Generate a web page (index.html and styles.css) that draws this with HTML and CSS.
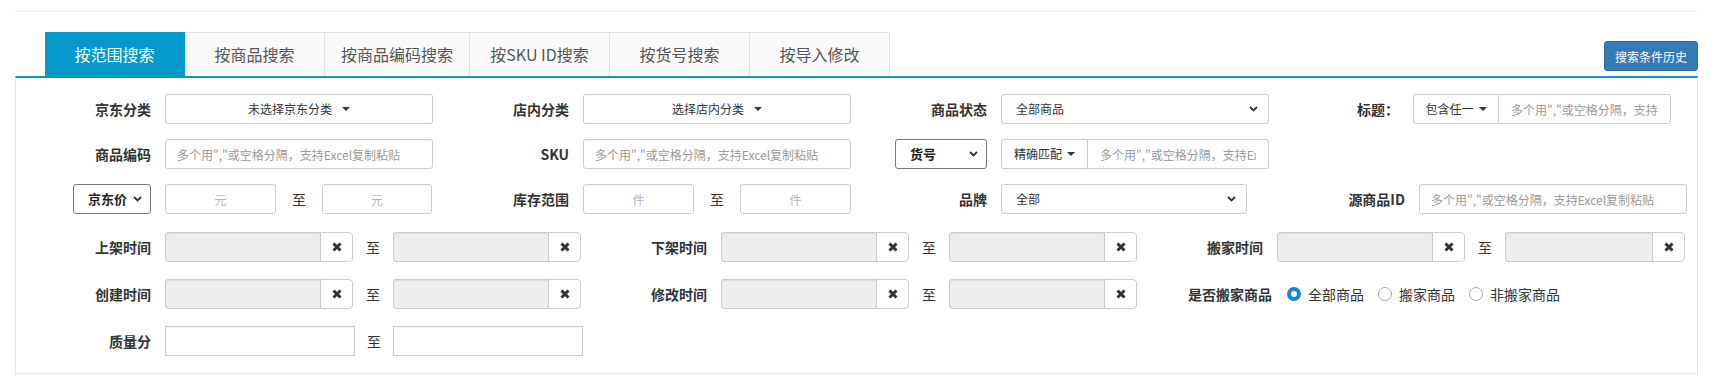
FILE: index.html
```html
<!DOCTYPE html>
<html lang="zh-CN">
<head>
    <meta charset="UTF-8">
    <title>商品搜索</title>
    <link rel="stylesheet" href="styles.css">
</head>
<body>
    <div class="wrap">
        <div class="top-rule"></div>

        <div class="tab-head">
            <ul class="tabs">
                <li class="tab active">按范围搜索</li>
                <li class="tab">按商品搜索</li>
                <li class="tab">按商品编码搜索</li>
                <li class="tab">按SKU ID搜索</li>
                <li class="tab">按货号搜索</li>
                <li class="tab">按导入修改</li>
            </ul>
            <button class="btn-history">搜索条件历史</button>
        </div>

        <div class="panel">
            <div class="panel-body">
                <!-- 第一行 -->
                <div class="row row-quad">
                    <div class="field">
                        <label class="field-label">京东分类</label>
                        <div class="dropdown w-268">未选择京东分类<span class="caret"></span></div>
                    </div>
                    <div class="field">
                        <label class="field-label">店内分类</label>
                        <div class="dropdown w-268">选择店内分类<span class="caret"></span></div>
                    </div>
                    <div class="field">
                        <label class="field-label">商品状态</label>
                        <div class="select w-268">
                            <span>全部商品</span>
                            <svg class="chev" width="9" height="6" viewBox="0 0 9 6"><path d="M1 1l3.5 3.5L8 1"/></svg>
                        </div>
                    </div>
                    <div class="field">
                        <label class="field-label label-short">标题：</label>
                        <div class="input-group w-258">
                            <div class="addon-btn w-86">包含任一<span class="caret"></span></div>
                            <input class="group-input" type="text" placeholder="多个用&quot;,&quot;或空格分隔，支持Excel复制粘贴">
                        </div>
                    </div>
                </div>

                <!-- 第二行 -->
                <div class="row row-quad">
                    <div class="field">
                        <label class="field-label">商品编码</label>
                        <input class="text-input w-268" type="text" placeholder="多个用&quot;,&quot;或空格分隔，支持Excel复制粘贴">
                    </div>
                    <div class="field">
                        <label class="field-label">SKU</label>
                        <input class="text-input w-268" type="text" placeholder="多个用&quot;,&quot;或空格分隔，支持Excel复制粘贴">
                    </div>
                    <div class="field">
                        <div class="field-label">
                            <div class="select select-dark w-92">
                                <span>货号</span>
                                <svg class="chev" width="9" height="6" viewBox="0 0 9 6"><path d="M1 1l3.5 3.5L8 1"/></svg>
                            </div>
                        </div>
                        <div class="input-group w-268">
                            <div class="addon-btn w-87">精确匹配<span class="caret"></span></div>
                            <input class="group-input" type="text" placeholder="多个用&quot;,&quot;或空格分隔，支持Excel复制粘贴">
                        </div>
                    </div>
                    <div class="field"></div>
                </div>

                <!-- 第三行 -->
                <div class="row row-quad row-gap-lg">
                    <div class="field">
                        <div class="field-label">
                            <div class="select select-dark w-78">
                                <span>京东价</span>
                                <svg class="chev" width="9" height="6" viewBox="0 0 9 6"><path d="M1 1l3.5 3.5L8 1"/></svg>
                            </div>
                        </div>
                        <input class="text-input center w-111" type="text" placeholder="元">
                        <span class="sep w-46">至</span>
                        <input class="text-input center w-110" type="text" placeholder="元">
                    </div>
                    <div class="field">
                        <label class="field-label">库存范围</label>
                        <input class="text-input center w-111" type="text" placeholder="件">
                        <span class="sep w-46">至</span>
                        <input class="text-input center w-111" type="text" placeholder="件">
                    </div>
                    <div class="field">
                        <label class="field-label">品牌</label>
                        <div class="select w-246">
                            <span>全部</span>
                            <svg class="chev" width="9" height="6" viewBox="0 0 9 6"><path d="M1 1l3.5 3.5L8 1"/></svg>
                        </div>
                    </div>
                    <div class="field">
                        <label class="field-label">源商品ID</label>
                        <input class="text-input w-268" type="text" placeholder="多个用&quot;,&quot;或空格分隔，支持Excel复制粘贴">
                    </div>
                </div>

                <!-- 时间行 -->
                <div class="row row-tri">
                    <div class="field">
                        <label class="field-label">上架时间</label>
                        <div class="date-group"><div class="date-input"></div><div class="date-clear"><svg width="12" height="12" viewBox="0 0 12 12"><path d="M2.5 2.5l7 7M9.5 2.5l-7 7"/></svg></div></div>
                        <span class="sep">至</span>
                        <div class="date-group"><div class="date-input"></div><div class="date-clear"><svg width="12" height="12" viewBox="0 0 12 12"><path d="M2.5 2.5l7 7M9.5 2.5l-7 7"/></svg></div></div>
                    </div>
                    <div class="field">
                        <label class="field-label">下架时间</label>
                        <div class="date-group"><div class="date-input"></div><div class="date-clear"><svg width="12" height="12" viewBox="0 0 12 12"><path d="M2.5 2.5l7 7M9.5 2.5l-7 7"/></svg></div></div>
                        <span class="sep">至</span>
                        <div class="date-group"><div class="date-input"></div><div class="date-clear"><svg width="12" height="12" viewBox="0 0 12 12"><path d="M2.5 2.5l7 7M9.5 2.5l-7 7"/></svg></div></div>
                    </div>
                    <div class="field">
                        <label class="field-label">搬家时间</label>
                        <div class="date-group"><div class="date-input"></div><div class="date-clear"><svg width="12" height="12" viewBox="0 0 12 12"><path d="M2.5 2.5l7 7M9.5 2.5l-7 7"/></svg></div></div>
                        <span class="sep">至</span>
                        <div class="date-group narrow"><div class="date-input"></div><div class="date-clear"><svg width="12" height="12" viewBox="0 0 12 12"><path d="M2.5 2.5l7 7M9.5 2.5l-7 7"/></svg></div></div>
                    </div>
                </div>

                <div class="row row-tri">
                    <div class="field">
                        <label class="field-label">创建时间</label>
                        <div class="date-group"><div class="date-input"></div><div class="date-clear"><svg width="12" height="12" viewBox="0 0 12 12"><path d="M2.5 2.5l7 7M9.5 2.5l-7 7"/></svg></div></div>
                        <span class="sep">至</span>
                        <div class="date-group"><div class="date-input"></div><div class="date-clear"><svg width="12" height="12" viewBox="0 0 12 12"><path d="M2.5 2.5l7 7M9.5 2.5l-7 7"/></svg></div></div>
                    </div>
                    <div class="field">
                        <label class="field-label">修改时间</label>
                        <div class="date-group"><div class="date-input"></div><div class="date-clear"><svg width="12" height="12" viewBox="0 0 12 12"><path d="M2.5 2.5l7 7M9.5 2.5l-7 7"/></svg></div></div>
                        <span class="sep">至</span>
                        <div class="date-group"><div class="date-input"></div><div class="date-clear"><svg width="12" height="12" viewBox="0 0 12 12"><path d="M2.5 2.5l7 7M9.5 2.5l-7 7"/></svg></div></div>
                    </div>
                    <div class="field">
                        <label class="field-label label-wide">是否搬家商品</label>
                        <div class="radios">
                            <span class="radio checked"><i></i>全部商品</span>
                            <span class="radio"><i></i>搬家商品</span>
                            <span class="radio"><i></i>非搬家商品</span>
                        </div>
                    </div>
                </div>

                <div class="row row-tri row-last">
                    <div class="field">
                        <label class="field-label">质量分</label>
                        <input class="text-input square w-190" type="text">
                        <span class="sep w-38">至</span>
                        <input class="text-input square w-190" type="text">
                    </div>
                </div>
            </div>
            <div class="panel-foot"></div>
        </div>
    </div>
</body>
</html>
```

FILE: styles.css
```css
* {
    margin: 0;
    padding: 0;
    box-sizing: border-box;
}

body {
    font-family: "Noto Sans CJK SC", "Liberation Sans", sans-serif;
    font-size: 14px;
    line-height: 1.42857;
    color: #333;
    background: #fff;
}

.wrap {
    margin-left: 15px;
    width: 1683px;
}

.top-rule {
    height: 12px;
    border-bottom: 1px solid #eee;
}

/* 标签页 */
.tab-head {
    display: flex;
    height: 44px;
    margin-top: 20px;
}

.tabs {
    display: flex;
    list-style: none;
    margin-left: 30px;
}

.tab {
    min-width: 140px;
    height: 44px;
    padding: 0 16px;
    border: 1px solid #e3e3e3;
    border-left: 0;
    border-bottom: 0;
    background: #fafafa;
    color: #555;
    font-size: 16px;
    line-height: 43px;
    text-align: center;
}

.tab.active {
    background: #0399cb;
    border-color: #0399cb;
    color: #fff;
}

.btn-history {
    margin-left: auto;
    margin-top: 9px;
    width: 94px;
    height: 30px;
    background: #337ab7;
    border: 1px solid #2e6da4;
    border-radius: 3px;
    color: #fff;
    font-family: inherit;
    font-size: 12px;
}

/* 面板 */
.panel {
    border: 1px solid #e5e5e5;
    border-top: 2px solid #0399cb;
    border-bottom: 0;
}

.panel-body {
    padding: 16px 0 16px 0;
}

.panel-foot {
    height: 20px;
    background: #f3f3f3;
}

.row {
    display: grid;
    margin-bottom: 15px;
}

.row-quad {
    grid-template-columns: repeat(4, 418px);
}

.row-tri {
    grid-template-columns: repeat(3, 556px);
    margin-bottom: 17px;
}

.row-gap-lg {
    margin-bottom: 18px;
}

.row-last {
    margin-bottom: 0;
}

.field {
    display: flex;
    align-items: center;
    height: 30px;
}

.field-label {
    display: flex;
    justify-content: flex-end;
    align-items: center;
    flex: none;
    width: 149px;
    padding-right: 14px;
    font-weight: bold;
    font-size: 14px;
    color: #333;
}

.label-short {
    width: 143px;
}

.label-wide {
    width: 159px;
    padding-right: 15px;
}

/* 控件 */
.text-input,
.dropdown,
.select {
    height: 30px;
    border: 1px solid #ccc;
    border-radius: 3px;
    background: #fff;
    font-family: inherit;
    font-size: 12px;
    color: #333;
    flex: none;
}

.text-input {
    padding: 0 11px;
    outline: none;
    box-shadow: inset 0 1px 1px rgba(0, 0, 0, 0.04);
}

.text-input::placeholder,
.group-input::placeholder {
    color: #999;
}

.text-input.center {
    text-align: center;
}

.text-input.center::placeholder {
    color: #b5b5b5;
}

.text-input.square {
    border-radius: 0;
}

.dropdown {
    display: flex;
    justify-content: center;
    align-items: center;
}

.caret {
    display: inline-block;
    width: 0;
    height: 0;
    margin-left: 10px;
    border-top: 4px solid #333;
    border-left: 4px solid transparent;
    border-right: 4px solid transparent;
}

.select {
    display: flex;
    justify-content: space-between;
    align-items: center;
    padding: 0 10px 0 14px;
}

.select-dark {
    border-color: #777;
    font-size: 13px;
    font-weight: bold;
    color: #222;
    padding: 0 8px 0 14px;
}

.chev path {
    fill: none;
    stroke: #333;
    stroke-width: 1.8;
}

.input-group {
    display: flex;
    height: 30px;
    flex: none;
}

.addon-btn {
    display: flex;
    justify-content: center;
    align-items: center;
    flex: none;
    height: 30px;
    border: 1px solid #ccc;
    border-radius: 3px 0 0 3px;
    background: #fff;
    font-size: 12px;
    color: #333;
}

.addon-btn .caret {
    margin-left: 5px;
}

.group-input {
    flex: 1;
    min-width: 0;
    height: 30px;
    padding: 0 12px;
    border: 1px solid #ccc;
    border-left: 0;
    border-radius: 0 3px 3px 0;
    font-family: inherit;
    font-size: 12px;
    outline: none;
}

.sep {
    flex: none;
    width: 40px;
    text-align: center;
    font-size: 14px;
    color: #333;
}

/* 日期 */
.date-group {
    display: flex;
    flex: none;
    width: 188px;
    height: 30px;
}

.date-group.narrow {
    width: 180px;
}

.date-input {
    flex: 1;
    background: #eee;
    border: 1px solid #ccc;
    border-right: 0;
    border-radius: 4px 0 0 4px;
    box-shadow: inset 0 1px 1px rgba(0, 0, 0, 0.075);
}

.date-clear {
    display: flex;
    justify-content: center;
    align-items: center;
    width: 33px;
    border: 1px solid #ccc;
    border-radius: 0 4px 4px 0;
    background: #fff;
}

.date-clear path {
    stroke: #333;
    stroke-width: 3;
}

/* 单选 */
.radios {
    display: flex;
    align-items: center;
    font-size: 14px;
    color: #333;
}

.radio {
    display: flex;
    align-items: center;
    margin-right: 14px;
}

.radio i {
    width: 14px;
    height: 14px;
    margin-right: 7px;
    border: 1px solid #aaa;
    border-radius: 50%;
    background: #fff;
}

.radio.checked i {
    border: 4px solid #1287d8;
    background: #fff;
}

/* 宽度 */
.w-268 { width: 268px; }
.w-258 { width: 258px; }
.w-246 { width: 246px; }
.w-190 { width: 190px; }
.w-111 { width: 111px; }
.w-110 { width: 110px; }
.w-92 { width: 92px; }
.w-87 { width: 87px; }
.w-86 { width: 86px; }
.w-78 { width: 78px; }
.w-46 { width: 46px; }
.w-38 { width: 38px; }
```
